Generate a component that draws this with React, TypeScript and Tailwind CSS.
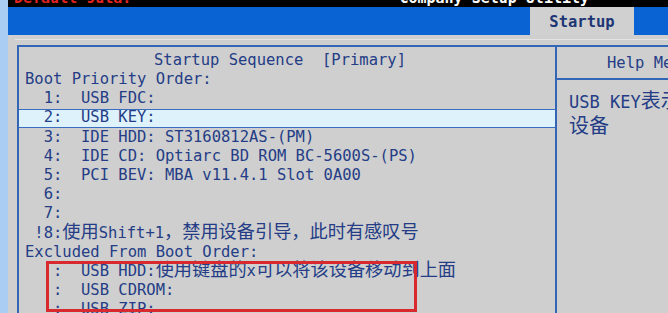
import React from "react";

const mono = { fontFamily: '"DejaVu Sans Mono", "Liberation Mono", "Noto Sans CJK SC", monospace' };

function C({ children, size = "text-[18.2px]" }: { children: React.ReactNode; size?: string }) {
  return (
    <span className={`${size} leading-none`} style={{ fontFamily: '"Noto Sans CJK SC", sans-serif' }}>
      {children}
    </span>
  );
}

function Row({ children, hl = false, up = false }: { children: React.ReactNode; hl?: boolean; up?: boolean }) {
  return (
    <div
      className={`flex h-[19.2px] items-center whitespace-pre pl-[6px] ${
        hl ? "border-y border-[#3a6cc0] bg-[#def2fb]" : ""
      } ${up ? "pb-[5px]" : ""}`}
    >
      <span className="leading-none">{children}</span>
    </div>
  );
}

export default function App() {
  return (
    <div className="relative flex h-[313px] w-[668px] overflow-hidden bg-[#cfcfcf]" style={mono}>
      <div className="w-[8px] shrink-0 bg-[#a9cdf3]" />
      <div className="flex min-w-0 flex-1 flex-col">
        <div className="h-[7px] shrink-0 overflow-hidden bg-black">
          <div className="mt-[-11px] flex text-[15px] font-bold leading-[18px]">
            <span className="pl-[6px] text-[#e02424]">Default  9ula:</span>
            <span className="pl-[268px] text-white">Company  Setup Utility</span>
          </div>
        </div>
        <div className="flex h-[28px] shrink-0 bg-[#0a63d2]">
          <div className="ml-[522px] flex w-[104px] items-center justify-center bg-[#d0d0d0] pt-[3px] text-[15.5px] font-bold text-[#1d3674]">
            Startup
          </div>
        </div>
        <div className="flex flex-1 flex-col pt-[4px]">
          <div className="ml-[7px] h-px bg-[#e4e4e4]" />
          <div className="mt-[5px] ml-[9px] flex flex-1 border-t-2 border-[#3466b8]">
            <div className="w-[540px] shrink-0 border-l-2 border-r-2 border-[#3466b8] pt-[4px] text-[15.5px] text-[#243d86]">
              <div className="flex h-[19.2px] items-center justify-center whitespace-pre pr-[14px]">
                <span className="leading-none">Startup Sequence  [Primary]</span>
              </div>
              <Row>Boot Priority Order:</Row>
              <Row>{"  1:  USB FDC:"}</Row>
              <Row hl>{"  2:  USB KEY:"}</Row>
              <Row>{"  3:  IDE HDD: ST3160812AS-(PM)"}</Row>
              <Row>{"  4:  IDE CD: Optiarc BD ROM BC-5600S-(PS)"}</Row>
              <Row>{"  5:  PCI BEV: MBA v11.4.1 Slot 0A00"}</Row>
              <Row>{"  6:"}</Row>
              <Row>{"  7:"}</Row>
              <Row up>
                {" !8:"}
                <C>使用</C>
                {"Shift+1"}
                <C>，禁用设备引导，此时有感叹号</C>
              </Row>
              <Row>Excluded From Boot Order:</Row>
              <Row up>
                {"   :  USB HDD:"}
                <C>使用键盘的</C>
                {"x"}
                <C>可以将该设备移动到上面</C>
              </Row>
              <Row>{"   :  USB CDROM:"}</Row>
              <Row>{"   :  USB ZIP:"}</Row>
            </div>
            <div className="flex min-w-0 flex-1 flex-col text-[15.5px] text-[#243d86]">
              <div className="flex h-[33px] shrink-0 items-center whitespace-pre border-b-2 border-[#3466b8] pl-[50px] pt-[3px]">
                Help Menu
              </div>
              <div className="whitespace-nowrap pl-[12px] pt-[10px] text-[17px] leading-[25px]">
                <div>
                  USB KEY<C size="text-[20px]">表示可引导的</C>
                </div>
                <div>
                  <C size="text-[20px]">设备</C>
                </div>
              </div>
            </div>
          </div>
        </div>
      </div>
      <div className="pointer-events-none absolute left-[46px] top-[261px] h-[51px] w-[371px] border-[3px] border-[#d82a2e]" />
    </div>
  );
}
